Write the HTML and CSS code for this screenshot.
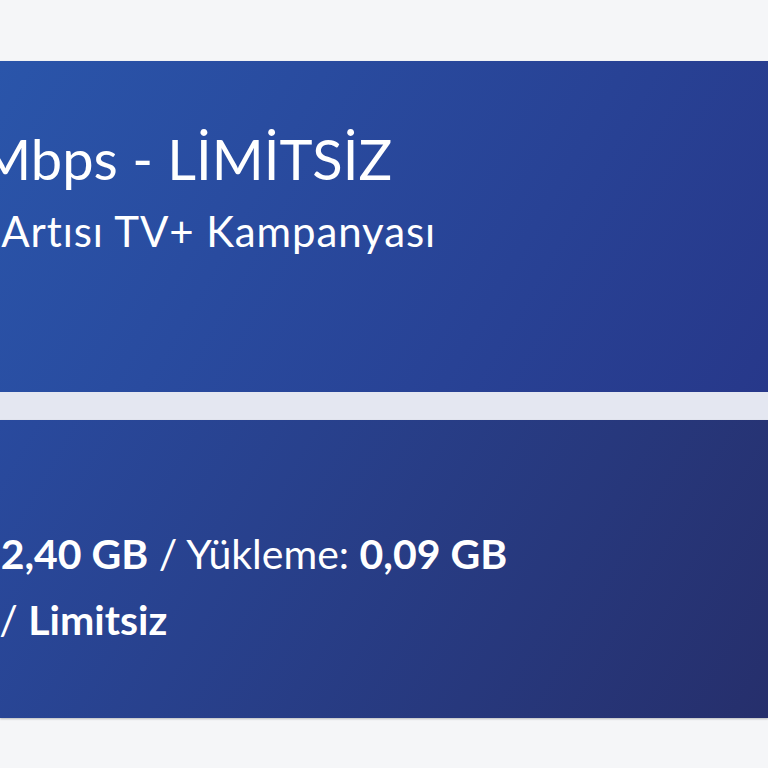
FILE: index.html
```html
<!DOCTYPE html>
<html lang="tr">
<head>
  <meta charset="UTF-8" />
  <meta name="viewport" content="width=device-width, initial-scale=1.0"/>
  <title>Paketim</title>
  <link rel="stylesheet" href="styles.css">
</head>
<body>
  <div class="page">
    <section class="card plan-card">
      <div class="card-body">
        <h1 class="plan-title">1000 Mbps - LİMİTSİZ</h1>
        <p class="plan-sub">Ev İnterneti Artısı TV+ Kampanyası</p>
      </div>
    </section>

    <section class="card usage-card">
      <div class="card-body">
        <p class="usage-line usage-transfer">İndirme: <b>12,40 GB</b> / Yükleme: <b>0,09 GB</b></p>
        <p class="usage-line usage-total">Kota: <b>12,49 GB</b> / <b>Limitsiz</b></p>
      </div>
    </section>
  </div>
</body>
</html>
```

FILE: styles.css
```css
:root {
  --bg: #f5f6f8;
  --gap: #e4e7f1;
}

html, body {
  margin: 0;
  padding: 0;
  height: 100%;
  overflow: hidden;
}

body {
  font-family: 'Lato', 'Noto Sans', sans-serif;
  background: var(--bg);
  color: #fff;
}

.page {
  padding-top: 61px;
  display: flex;
  flex-direction: column;
}

.card {
  box-shadow: 0 1px 2px rgba(0,0,0,0.25);
  overflow: hidden;
}

/* the page is scrolled sideways: the start of each line sits off-screen */
.card-body {
  margin-left: -175px;
  white-space: nowrap;
}

.plan-card {
  height: 331px;
  border-bottom: 28px solid var(--gap);
  background: linear-gradient(120deg, #2a55aa, #27388a);
}

.plan-card .card-body {
  padding-top: 64px;
}

.plan-title {
  margin: 0 0 0 10px;
  font-size: 56px;
  font-weight: 400;
  line-height: 1.2;
}

.plan-sub {
  margin: 14px 0 0 -57px;
  font-size: 42px;
  letter-spacing: 0.9px;
  line-height: 1.2;
}

.usage-card {
  height: 298px;
  background: linear-gradient(120deg, #294a9e, #262f6c);
}

.usage-card .card-body {
  padding-top: 109px;
}

.usage-line {
  margin: 0 0 17px;
  font-size: 41px;
  line-height: 1.2;
}

.usage-transfer {
  margin-left: -6px;
}

.usage-total {
  margin-left: -112px;
}

.usage-line b {
  font-weight: 700;
}
```
